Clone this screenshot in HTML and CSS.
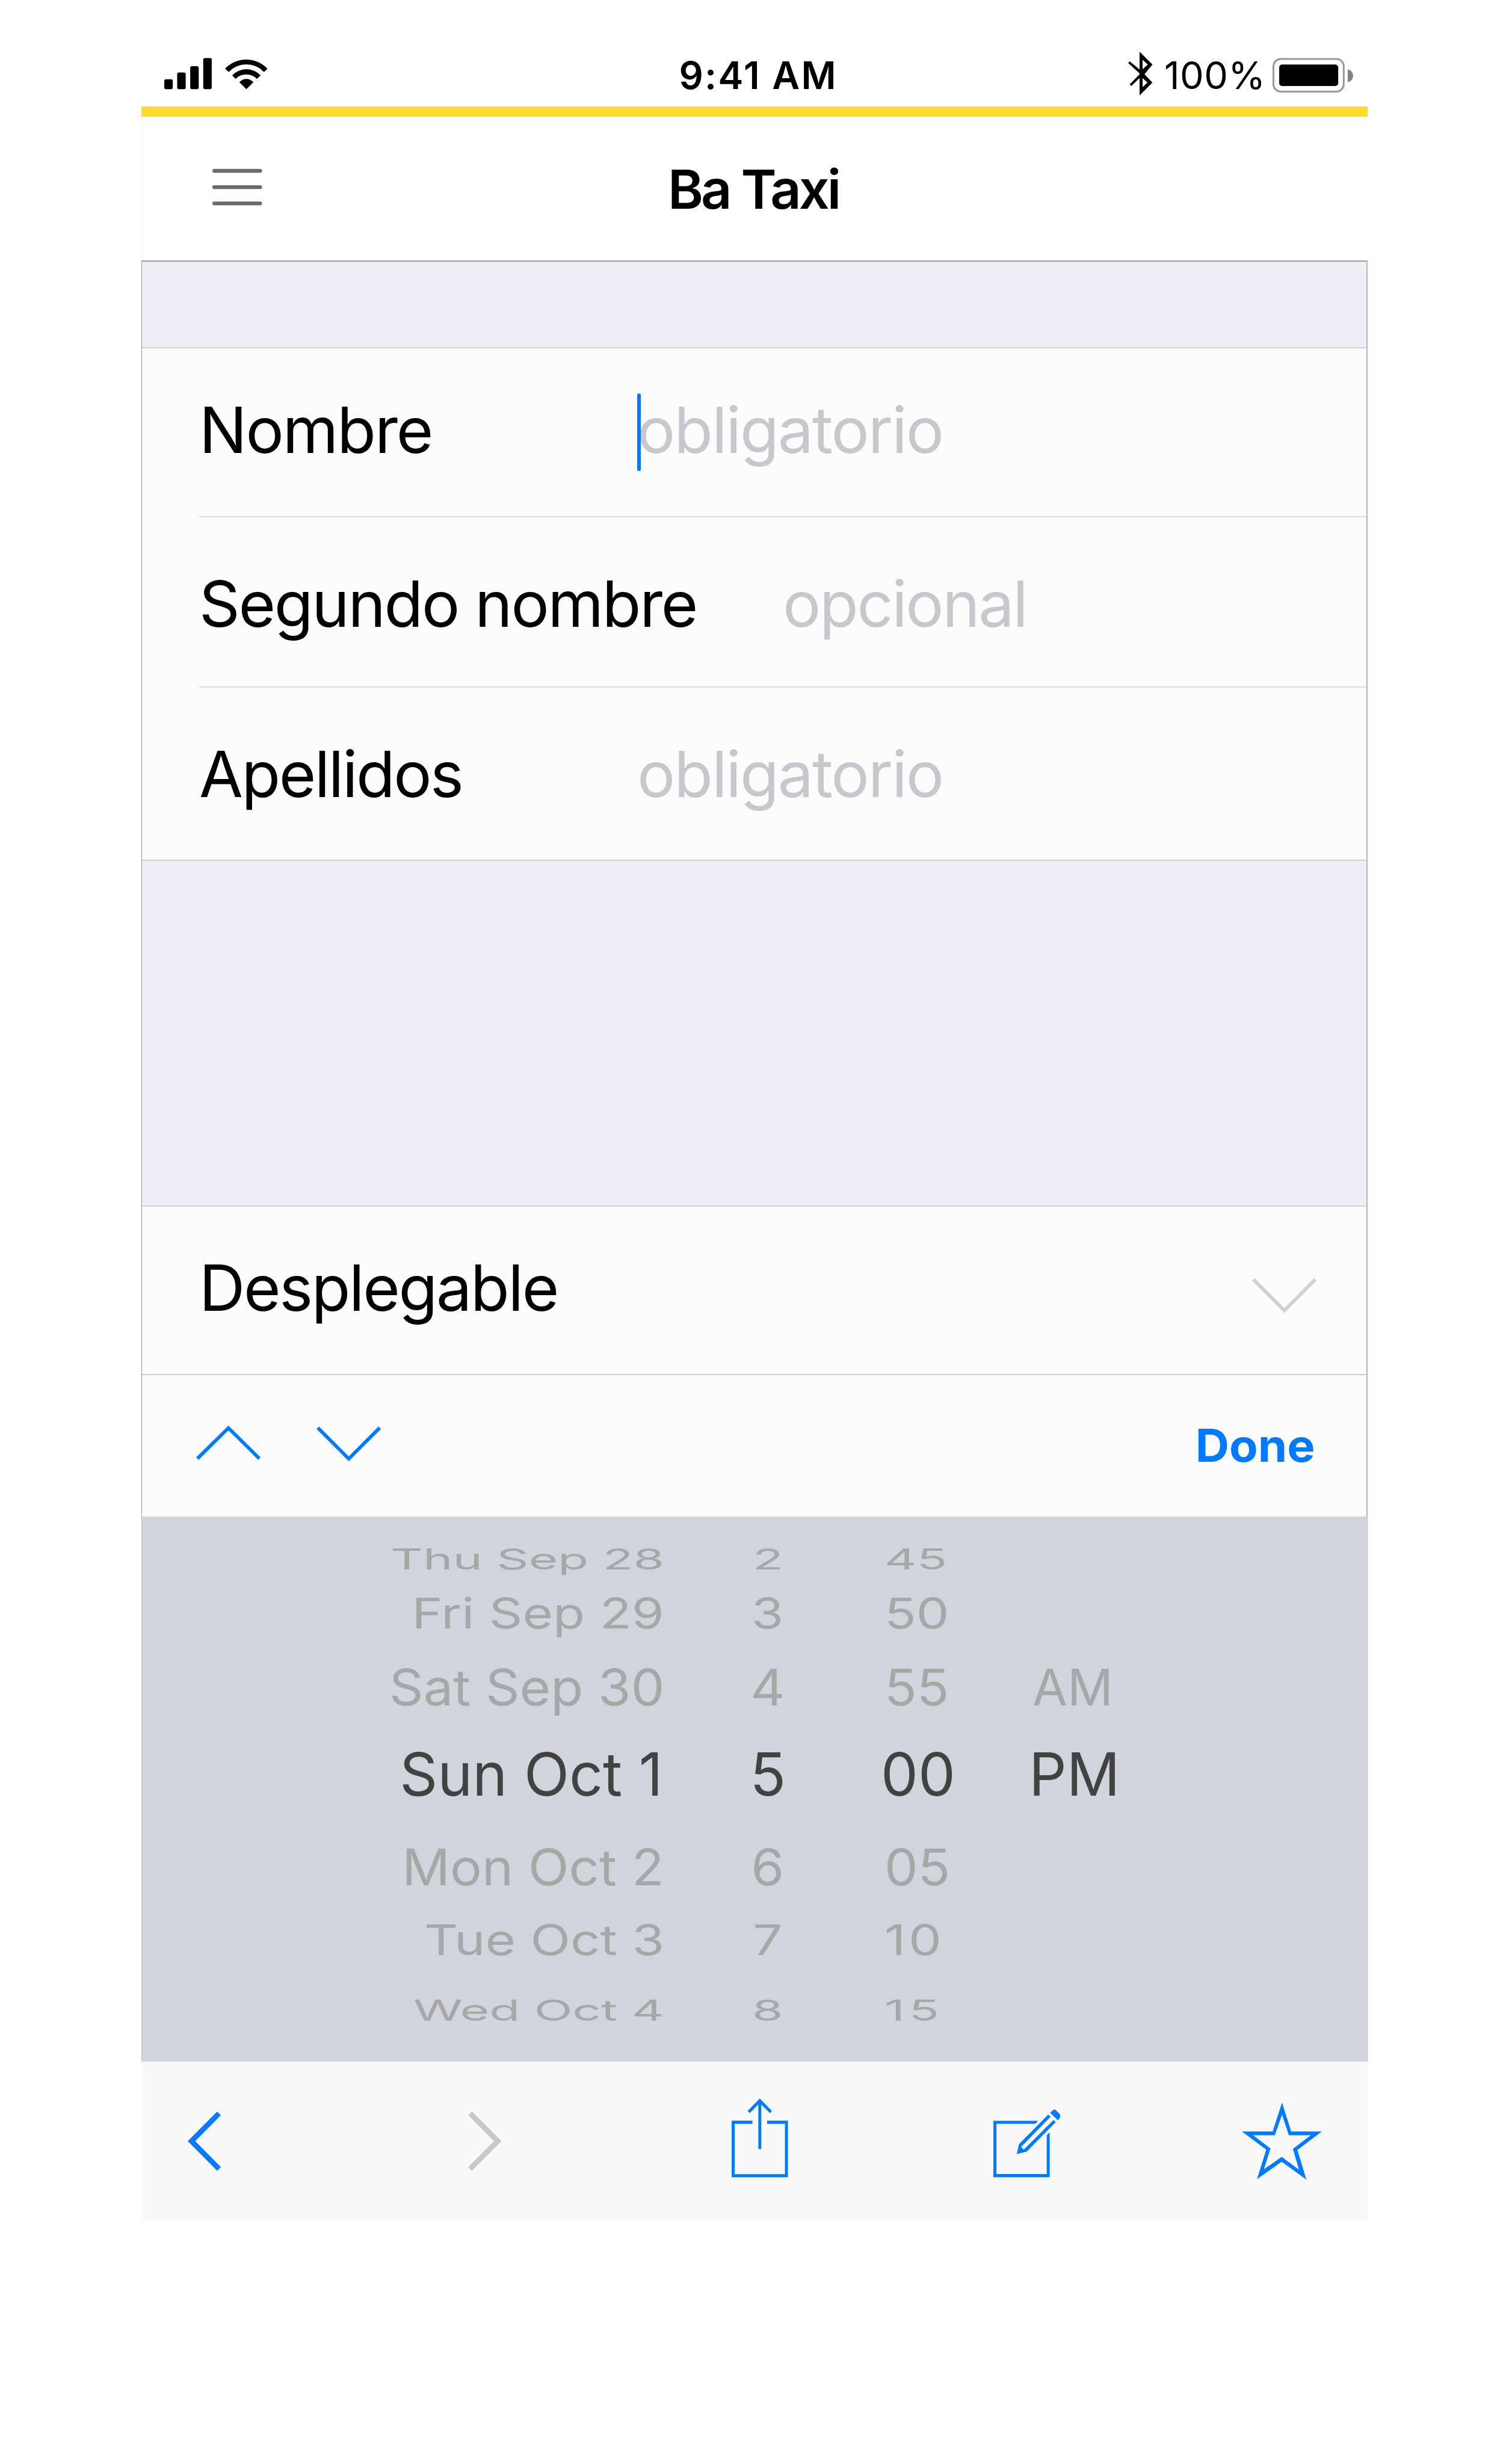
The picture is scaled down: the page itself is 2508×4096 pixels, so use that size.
FILE: index.html
```html
<!DOCTYPE html>
<html lang="es">
<head>
<meta charset="utf-8">
<title>Ba Taxi</title>
<link rel="stylesheet" href="styles.css">
</head>
<body>
<main class="phone">
  <header class="status">
    <div class="status-left">
      <svg class="signal" viewBox="362.8 110 105.1 113">
        <rect x="362.8" y="174.7" width="18.8" height="22" rx="4"/>
        <rect x="391.4" y="160" width="18.8" height="36.7" rx="4"/>
        <rect x="420.2" y="145.8" width="18.8" height="50.9" rx="4"/>
        <rect x="449" y="127.8" width="18.8" height="68.9" rx="4"/>
      </svg>
      <svg class="wifi" viewBox="496.4 110 94 113">
        <path d="M496.4 151.3A65.2 65.2 0 0 1 590.3 151.3L582.7 158.7A53.9 53.9 0 0 0 504.6 158.7Z"/>
        <path d="M512.2 166.3A43 43 0 0 1 575 166.3L566.8 174A32.6 32.6 0 0 0 519.9 174Z"/>
        <path d="M528 181.3A20.9 20.9 0 0 1 559.2 181.3L543.6 196.7Z"/>
      </svg>
    </div>
    <span class="time">9:41 AM</span>
    <div class="status-right">
      <svg class="bluetooth" viewBox="2493.8 110 53.8 113">
        <path fill-rule="evenodd" d="M2519.1 114L2547.6 142.3L2530 164L2547.6 182.3L2519.1 210.7V172L2500.9 189.7L2497.3 186.3L2519.1 164V161.7L2493.8 139L2497.3 135.3L2519.1 153.3ZM2525.8 132V152.7L2537.3 142.3ZM2525.8 172V192.3L2536.5 182.3Z"/>
      </svg>
      <span class="percent">100%</span>
      <svg class="battery" viewBox="2810.9 110 178 113">
        <rect x="2812.9" y="130" width="155.3" height="72" rx="16" fill="none" stroke="#999" stroke-width="4"/>
        <rect x="2825.6" y="142.2" width="130.4" height="47.6" rx="6.5"/>
        <path fill="#808080" d="M2977 153C2985 155 2988.9 161 2988.9 167.2S2985 179.5 2977 181.3Z"/>
      </svg>
    </div>
  </header>
  <div class="accent"></div>
  <nav class="navbar">
    <svg class="menu" viewBox="468.9 366.8 109.7 100" fill="#6b6b6b">
      <rect x="468.9" y="373.2" width="109.7" height="8.4" rx="4"/>
      <rect x="468.9" y="409.2" width="109.7" height="8.4" rx="4"/>
      <rect x="468.9" y="445.2" width="109.7" height="8.4" rx="4"/>
    </svg>
    <h1 class="title">Ba Taxi</h1>
  </nav>

  <section class="form">
    <div class="spacer spacer-top"></div>
    <div class="group">
      <div class="row row-first">
        <label class="label label-nombre">Nombre</label>
        <div class="field"><i class="caret"></i><span class="hint">obligatorio</span></div>
      </div>
      <div class="row row-second">
        <label class="label label-segundo">Segundo nombre</label>
        <div class="field"><span class="hint hint-optional">opcional</span></div>
      </div>
      <div class="row row-third">
        <label class="label label-apellidos">Apellidos</label>
        <div class="field"><span class="hint">obligatorio</span></div>
      </div>
    </div>
    <div class="spacer spacer-mid"></div>
    <div class="dropdown">
      <span class="label">Desplegable</span>
      <svg class="dropdown-arrow" viewBox="2766.4 2787 142.6 120"><path d="M2769.2 2829.3L2837.7 2898L2906.2 2829.3" fill="none" stroke="#d1d1d6" stroke-width="8"/></svg>
    </div>
    <div class="accessory">
      <svg class="step" viewBox="432.7 3145.3 142.6 100"><path d="M435.5 3224.6L504 3157L572.5 3224.6" fill="none" stroke="#007aff" stroke-width="7.7"/></svg>
      <svg class="step" viewBox="699.8 3145.3 142.6 100"><path d="M702.6 3156.4L771.1 3225L839.6 3156.4" fill="none" stroke="#007aff" stroke-width="7.7"/></svg>
      <span class="done">Done</span>
    </div>
  </section>

  <section class="picker">
    <div class="wheel wheel-date">
      <span class="far">Thu Sep 28</span><span class="mid">Fri Sep 29</span><span class="near">Sat Sep 30</span><span class="current">Sun Oct 1</span><span class="near">Mon Oct 2</span><span class="mid">Tue Oct 3</span><span class="far">Wed Oct 4</span>
    </div>
    <div class="wheel wheel-hour">
      <span class="far">2</span><span class="mid">3</span><span class="near">4</span><span class="current">5</span><span class="near">6</span><span class="mid">7</span><span class="far">8</span>
    </div>
    <div class="wheel wheel-minute">
      <span class="far">45</span><span class="mid">50</span><span class="near">55</span><span class="current">00</span><span class="near">05</span><span class="mid teen">10</span><span class="far teen">15</span>
    </div>
    <div class="wheel wheel-period">
      <span></span><span></span><span class="near">AM</span><span class="current">PM</span>
    </div>
  </section>

  <footer class="toolbar">
    <svg class="back" viewBox="414.2 4632 73.3 201" fill="#007aff"><path d="M414.2 4732.2L479.2 4666.8L487.5 4674.8L430.7 4732.2L487.5 4789.4L479.2 4797.6Z"/></svg>
    <svg class="forward" viewBox="1034.1 4632 74 201" fill="#c7c7cc"><path d="M1108.1 4732.2L1042.4 4666.5L1034.1 4674.7L1091.5 4732.2L1034.1 4789.4L1042.4 4797.8Z"/></svg>
    <svg class="share" viewBox="1617 4632 124.4 201" fill="#007aff">
      <path d="M1617 4687H1662.9V4693.7H1623.7V4805H1734.7V4693.7H1695.4V4687H1741.4V4811.7H1617Z"/>
      <path d="M1679.2 4638L1706 4665.3L1701.5 4670.2L1682.4 4651V4749.6H1676V4651L1656.9 4670.2L1652.4 4665.3Z"/>
    </svg>
    <svg class="compose" viewBox="2194.7 4632 148.4 201" fill="#007aff">
      <path d="M2194.7 4687H2293.6L2287.3 4693.7H2201.6V4805H2312.6V4719L2319.2 4712.3V4811.7H2194.7Z"/>
      <path d="M2251.2 4739L2316.2 4673.3L2321 4678.2L2256 4744.8L2261.8 4751L2327.7 4685.2L2332.5 4690L2268.4 4755.2L2246.4 4760.7Z"/>
      <path d="M2320.1 4669.3L2327.2 4663.2Q2329.8 4661.3 2332.5 4663.4L2341 4671.8Q2344.5 4675.5 2342.3 4679.5L2337.3 4686Z"/>
    </svg>
    <svg class="star" viewBox="2743.8 4632 177 201" fill="#007aff">
      <path fill-rule="evenodd" d="M2832.6 4647L2852.9 4710.6H2920.8L2866.6 4751.5L2886.4 4817.2L2831.9 4777.7L2777.3 4816L2797.6 4751L2743.8 4710.6H2811.8ZM2832.6 4673.3L2816.8 4719H2768.7L2807 4748.3L2792.6 4794.3L2831.9 4767L2870.1 4795.3L2856.7 4749.3L2896 4719H2847.6Z"/>
    </svg>
  </footer>
</main>
</body>
</html>
```
FILE: styles.css
```css
* {
  box-sizing: border-box;
}

html,
body {
  margin: 0;
  background: #fff;
}

body {
  min-height: 4096px;
  font-family: Inter, "Liberation Sans", sans-serif;
  color: #000;
}

svg {
  display: block;
  flex: none;
}

.phone {
  width: 2038px;
  margin-left: 235px;
  white-space: nowrap;
}

/* Status bar */
.status {
  display: flex;
  align-items: center;
  height: 177px;
  padding: 73px 24px 0 38px;
  font-size: 63px;
  line-height: 100px;
}

.status-left {
  display: flex;
  gap: 21.5px;
  width: 855.4px;
}

.signal {
  width: 79px;
  height: 85px;
}

.wifi {
  width: 70.7px;
  height: 85px;
}

.time {
  font-weight: 600;
  letter-spacing: 2.4px;
}

.status-right {
  display: flex;
  align-items: center;
  margin-left: auto;
}

.bluetooth {
  width: 40.4px;
  height: 85px;
  margin-right: 19.5px;
}

.percent {
  letter-spacing: 0.4px;
}

.battery {
  width: 133.9px;
  height: 85px;
  margin-left: 11.5px;
}

.accent {
  height: 17px;
  background: #ffdb2c;
}

/* Navigation bar */
.navbar {
  display: flex;
  align-items: center;
  height: 239px;
  padding-left: 117px;
  background: #fefefe;
  border-left: 1px solid #f6f6f6;
}

.menu {
  width: 82.5px;
  height: 75.2px;
}

.title {
  margin: 2px 0 0 674.4px;
  font-size: 89.7px;
  font-weight: 600;
  letter-spacing: -3.9px;
  line-height: 120px;
}

/* Form */
.form {
  height: 2088px;
  border-top: 2px solid #9b9b9e;
  border-left: 1px solid #9a9a9a;
  border-right: 2px solid #b6b6ba;
  background: #fcfcfc;
}

.spacer {
  background: #efeef4;
}

.spacer-top {
  height: 142px;
}

.spacer-mid {
  height: 573px;
}

.group {
  height: 854px;
  padding-left: 95px;
  border-top: 2px solid #d3d2d7;
  border-bottom: 2px solid #d3d2d7;
}

.row {
  display: flex;
  align-items: center;
}

.row + .row {
  border-top: 2px solid #dddce1;
}

.row-first {
  height: 279px;
  padding-bottom: 8px;
}

.row-second {
  height: 283px;
  padding-top: 6px;
}

.row-third {
  height: 288px;
  padding-top: 1px;
}

.label,
.hint {
  font-size: 105.7px;
  line-height: 130px;
  letter-spacing: -2.33px;
}

.label-nombre {
  width: 728px;
  letter-spacing: -2.1px;
}

.label-segundo {
  width: 970px;
}

.label-apellidos {
  width: 728px;
  letter-spacing: -2.5px;
}

.field {
  position: relative;
}

.hint {
  color: #c7c7cd;
  letter-spacing: -2.07px;
}

.hint-optional {
  letter-spacing: -2.43px;
}

.caret {
  position: absolute;
  left: 0;
  top: 4px;
  width: 6px;
  height: 129px;
  border-radius: 3px;
  background: #007aff;
}

.dropdown {
  display: flex;
  align-items: center;
  justify-content: space-between;
  height: 280px;
  padding: 0 83px 9px 95px;
  border-top: 2px solid #d3d2d7;
}

.dropdown-arrow {
  width: 107.3px;
  height: 90.3px;
}

.accessory {
  display: flex;
  align-items: center;
  gap: 93.6px;
  height: 235px;
  padding: 0 85px 0 89.5px;
  border-top: 2px solid #cdccd1;
}

.step {
  width: 107.3px;
  height: 75.2px;
}

.done {
  margin-left: auto;
  font-size: 75px;
  font-weight: 700;
  color: #007aff;
  transform: scaleX(1.038);
  transform-origin: right;
}

/* Date picker */
.picker {
  display: grid;
  grid-template-columns: 868px 344px 268px 1fr;
  height: 906px;
  padding-top: 26px;
  background: #d1d4dc;
  border-left: 1px solid #b9bbc0;
  border-right: 1px solid #b9bbc0;
}

.wheel {
  display: grid;
  grid-template-rows: 90px 90.6px 155.6px 132.6px 177px 65.2px 168px;
  align-items: center;
  color: #a7a7a7;
}

.wheel-date {
  justify-items: end;
}

.wheel-date span {
  transform-origin: right;
}

.wheel-hour {
  justify-items: center;
}

.wheel-minute {
  padding-left: 22px;
}

.wheel-minute,
.wheel-period {
  justify-items: start;
}

.wheel-minute span,
.wheel-period span {
  transform-origin: left;
}

.far {
  font-size: 47.5px;
  line-height: 60px;
  transform: scaleX(1.755);
}

.mid {
  font-size: 70.2px;
  line-height: 60px;
  transform: scaleX(1.238);
}

.near {
  font-size: 83.3px;
  line-height: 100px;
  transform: scaleX(1.06);
}

.current {
  font-size: 99.6px;
  line-height: 120px;
  color: #424242;
  transform: scaleX(0.986);
}

.teen {
  letter-spacing: 3.8px;
}

.wheel-date .current {
  margin-right: 2px;
}

.wheel-minute .current,
.wheel-period .current {
  margin-left: -6px;
}

.wheel-period .near {
  transform: scaleX(1.01);
}

/* Browser toolbar */
.toolbar {
  display: flex;
  align-items: center;
  height: 265px;
  padding-left: 76.6px;
  background: #f9f9f9;
}

.toolbar svg {
  height: 151.2px;
}

.back {
  width: 55.1px;
}

.forward {
  width: 55.7px;
  margin-left: 411.1px;
}

.share {
  width: 93.6px;
  margin-left: 382.8px;
}

.compose {
  width: 111.6px;
  margin-left: 341px;
}

.star {
  width: 133.1px;
  margin-left: 301.4px;
}
```
